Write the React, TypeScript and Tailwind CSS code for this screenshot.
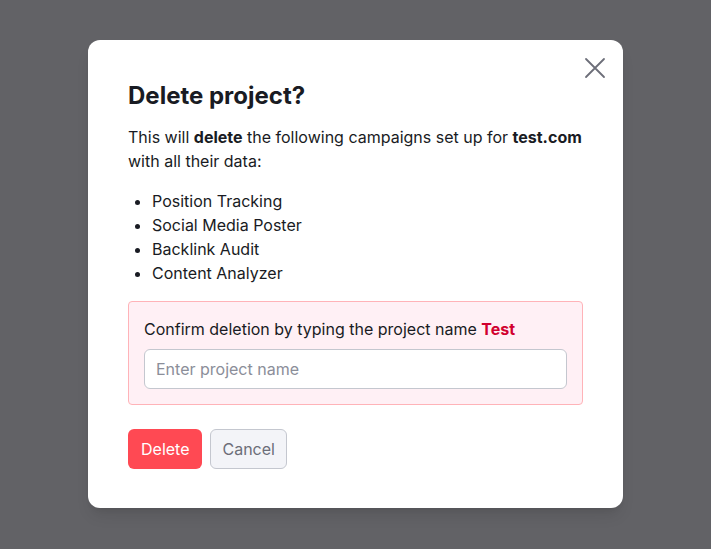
import React from "react";

const App: React.FC = () => {
  return (
    <div
      className="min-h-screen w-full bg-[#626266] flex justify-center pt-10"
      style={{ fontFamily: "Inter, 'Noto Sans', sans-serif" }}
    >
      <div className="relative w-[535px] h-[468px] bg-white rounded-xl px-10 pt-10 pb-10 shadow-lg">
        {/* Close */}
        <button className="absolute top-[17px] right-[17px] text-[#6c6e79]" aria-label="Close">
          <svg width="22" height="22" viewBox="0 0 22 22" fill="none" stroke="currentColor" strokeWidth="1.8" strokeLinecap="round">
            <path d="M2 2L20 20M20 2L2 20" />
          </svg>
        </button>

        <h2 className="text-2xl leading-8 font-bold text-[#191b23] mb-[13px]">
          Delete project?
        </h2>

        <p className="text-base leading-6 text-[#191b23]">
          This will <span className="font-bold">delete</span> the following
          campaigns set up for <span className="font-bold">test.com</span> with
          all their data:
        </p>

        <ul className="list-disc pl-6 mt-4 text-base leading-6 text-[#191b23]">
          <li>Position Tracking</li>
          <li>Social Media Poster</li>
          <li>Backlink Audit</li>
          <li>Content Analyzer</li>
        </ul>

        {/* Confirm box */}
        <div className="mt-4 border border-[#ffb3b8] bg-[#fff0f5] rounded p-[15px]">
          <p className="text-base leading-6 text-[#191b23]">
            Confirm deletion by typing the project name{" "}
            <span className="font-bold text-[#d1002f]">Test</span>
          </p>
          <input
            type="text"
            placeholder="Enter project name"
            className="mt-2 w-full h-10 px-[11px] text-base bg-white border border-[#c4c7cf] rounded-md text-[#191b23] placeholder:text-[#8b8e99] outline-none"
          />
        </div>

        {/* Actions */}
        <div className="flex gap-2 mt-6">
          <button className="h-10 px-[13px] rounded-md bg-[#ff4953] text-white text-base">
            Delete
          </button>
          <button className="h-10 px-[11px] rounded-md bg-[#f3f4f8] border border-[#c4c7cf] text-[#6c6e79] text-base">
            Cancel
          </button>
        </div>
      </div>
    </div>
  );
};

export default App;
